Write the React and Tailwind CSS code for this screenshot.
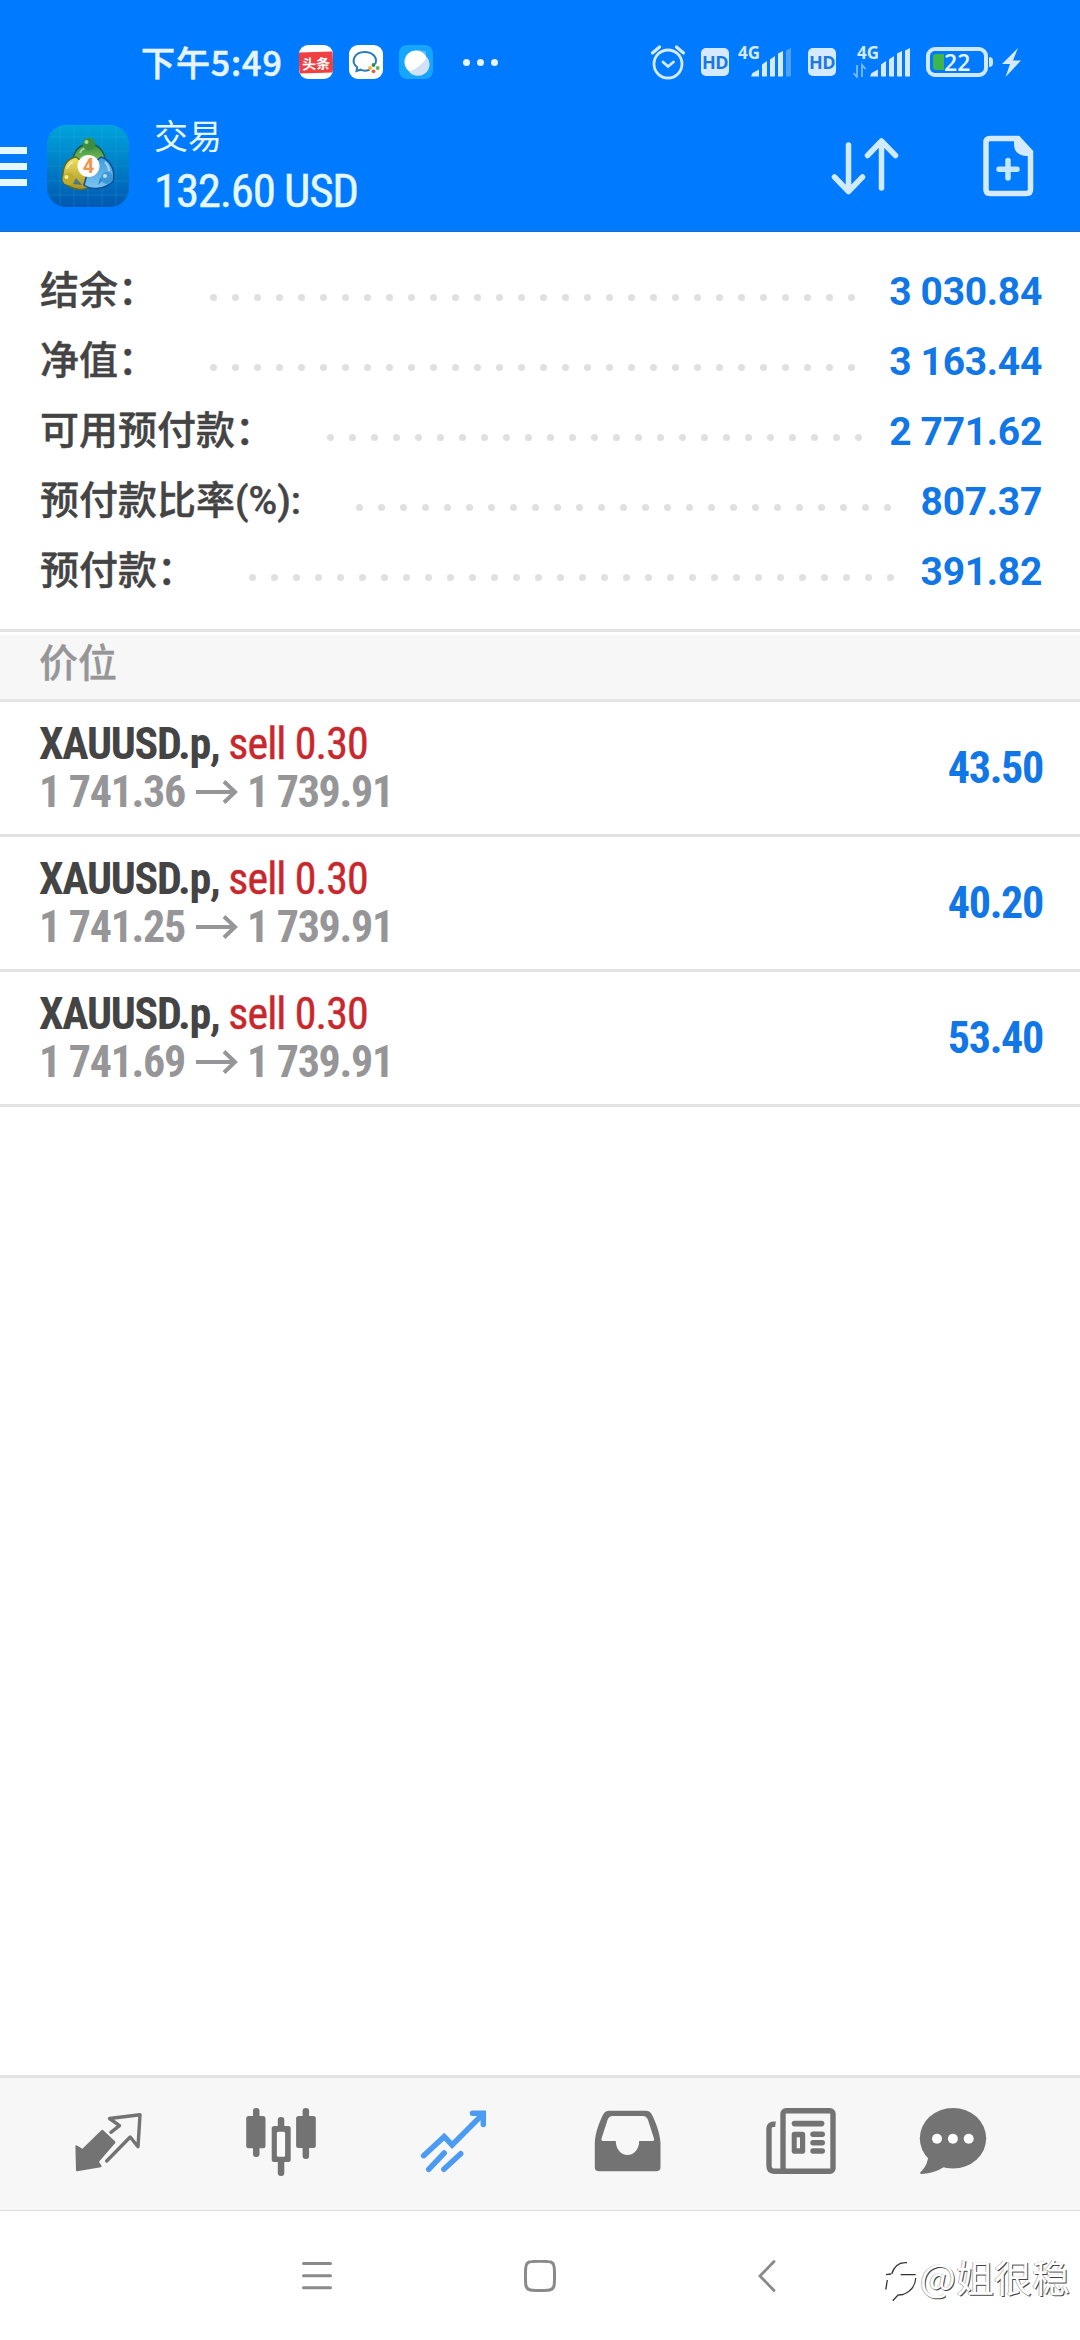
const summary = [
  { label: "结余：", value: "3 030.84", dots: 30, labelWidth: "w-[170px]" },
  { label: "净值：", value: "3 163.44", dots: 30, labelWidth: "w-[170px]" },
  { label: "可用预付款：", value: "2 771.62", dots: 25, labelWidth: "w-[287px]" },
  { label: "预付款比率(%):", value: "807.37", dots: 25, labelWidth: "w-[316px]" },
  { label: "预付款：", value: "391.82", dots: 30, labelWidth: "w-[209px]" },
];

const positions = [
  { symbol: "XAUUSD.p", side: "sell 0.30", open: "1 741.36", current: "1 739.91", profit: "43.50" },
  { symbol: "XAUUSD.p", side: "sell 0.30", open: "1 741.25", current: "1 739.91", profit: "40.20" },
  { symbol: "XAUUSD.p", side: "sell 0.30", open: "1 741.69", current: "1 739.91", profit: "53.40" },
];

function HdBadge() {
  return (
    <span className="flex size-7 items-center justify-center rounded-[5px] bg-[#d6eaff] font-['Open_Sans',sans-serif] text-[18px] font-bold tracking-tight text-[#1a78e0]">
      HD
    </span>
  );
}

function Signal({ weak, data }) {
  return (
    <div className="flex h-9 w-[58px] flex-col">
      <span
        className={`${data ? "pl-1" : ""} h-[14px] font-['Open_Sans',sans-serif] text-[17px] font-bold leading-[17px] text-[#d6eaff]`}
      >
        4G
      </span>
      <svg viewBox="0 3 58 30" className="-mt-[10px] h-[30px] w-[58px]" fill="#d6eaff">
        {data && (
          <path d="M4 20v12l-3.500-4M9 32V20l3.500 4" fill="none" stroke="#7db9ff" strokeWidth="1.800" />
        )}
        <g transform={data ? "translate(17 0)" : "translate(13 0)"}>
          <path d="M0 31.500l1.500-3.500 6.500-3.500v7z" />
          <path d="M11 31.500v-12l5-3.500v15.500z" />
          <path d="M19 31.500v-17l5-3.500v20.500z" />
          <path d="M27 31.500v-23l5-2.500v25.500z" />
          <path d="M35 31.500v-26l5-2.500v28.500z" opacity={weak ? 0.35 : 1} />
        </g>
      </svg>
    </div>
  );
}

function StatusBar() {
  return (
    <div className="flex h-[124px] items-center pl-[141px] pr-[59px]">
      <span className="w-[158px] whitespace-nowrap font-['Noto_Sans_CJK_SC',sans-serif] text-[34px] font-medium leading-none tracking-[0.9px] text-[#e6f4ff] [-webkit-text-stroke:0.6px_currentColor]">
        下午5:49
      </span>
      <div className="flex gap-4">
        <span className="flex size-[34px] items-center overflow-hidden rounded-[9px] bg-white">
          <span className="flex h-[21px] w-full -rotate-2 items-center justify-center whitespace-nowrap bg-[#f04142] font-['Noto_Sans_CJK_SC',sans-serif] text-[14px] font-bold leading-none text-white">
            头条
          </span>
        </span>
        <svg viewBox="0 0 34 34" className="size-[34px]">
          <rect width="34" height="34" rx="9" fill="#fff" />
          <path
            d="M20 25c-3 1-6 1-8.500-.3L7.500 26l.7-3.700C1 16.500 5.500 7 15.500 7 24 7 28.500 12.500 26.500 18.500"
            fill="none"
            stroke="#2b7cb8"
            strokeWidth="2"
            strokeLinecap="round"
          />
          <circle cx="24.500" cy="20" r="1.900" fill="#2c8a5a" />
          <circle cx="28.700" cy="23" r="1.900" fill="#58b947" />
          <circle cx="24.500" cy="26.300" r="1.900" fill="#ef5a35" />
          <circle cx="21" cy="23" r="1.900" fill="#f4b52b" />
        </svg>
        <svg viewBox="0 0 34 34" className="size-[34px]">
          <rect width="34" height="34" rx="8" fill="#16a5ff" />
          <path d="M17 5l10 1v10z" fill="#5bbcff" />
          <circle cx="17" cy="17" r="11.500" fill="#fff" />
          <path d="M28 12a11.500 11.500 0 0 1-18 14.500c7-2 13-7 18-14.500z" fill="#d3e1f5" />
        </svg>
      </div>
      <div className="ml-[30px] flex gap-[7px]">
        <span className="size-[7px] rounded-full bg-[#e6f4ff]" />
        <span className="size-[7px] rounded-full bg-[#e6f4ff]" />
        <span className="size-[7px] rounded-full bg-[#e6f4ff]" />
      </div>

      <div className="ml-auto flex items-center">
        <svg
          viewBox="0 0 36 36"
          className="mr-[15px] size-9"
          fill="none"
          stroke="#d6eaff"
          strokeWidth="2.800"
          strokeLinecap="round"
        >
          <circle cx="18" cy="20" r="14" />
          <path d="M13 18l5 4.500 5.500-4.500" />
          <path d="M2.500 9l7-6M33.500 9l-7-6" strokeWidth="3.200" />
        </svg>
        <HdBadge />
        <div className="ml-[9px] mr-[12px]">
          <Signal weak />
        </div>
        <HdBadge />
        <div className="ml-[17px] mr-[15px]">
          <Signal data />
        </div>
        <div className="flex h-[30px] w-[62px] items-center rounded-[9px] border-4 border-[#cfe8ff] pl-[3px]">
          <span className="h-4 w-[11px] rounded-l-[3px] bg-[#3fb54e]" />
          <span className="font-['Open_Sans',sans-serif] text-[23px] font-semibold leading-none text-[#e6f4ff]">22</span>
        </div>
        <span className="ml-px h-[10px] w-[4px] rounded-r bg-[#cfe8ff]" />
        <svg viewBox="0 0 19 29" className="ml-[9px] h-[29px] w-[19px]" fill="#d6eaff">
          <path d="M16 0L0 16h8L3.500 29 19 12.500h-8z" />
        </svg>
      </div>
    </div>
  );
}

function AppLogo() {
  return (
    <svg viewBox="0 0 82 82" className="size-[82px]">
      <defs>
        <linearGradient id="tile" x1="0" y1="0" x2="0" y2="1">
          <stop offset="0" stopColor="#00a4dc" />
          <stop offset="1" stopColor="#0058b0" />
        </linearGradient>
        <linearGradient id="green" x1="0" y1="0" x2="0" y2="1">
          <stop offset="0" stopColor="#2f8a44" />
          <stop offset="1" stopColor="#9ed05a" />
        </linearGradient>
        <linearGradient id="yellow" x1="0" y1="0" x2="0" y2="1">
          <stop offset="0" stopColor="#f1e25a" />
          <stop offset="1" stopColor="#a8932a" />
        </linearGradient>
        <linearGradient id="blue" x1="0" y1="0" x2="0" y2="1">
          <stop offset="0" stopColor="#3d9be0" />
          <stop offset="1" stopColor="#7cc4f0" />
        </linearGradient>
      </defs>
      <rect width="82" height="82" rx="19" fill="url(#tile)" />
      <path
        d="M13 1v80M27 0v82M41 0v82M55 0v82M69 1v80M1 12h80M0 26h82M0 41h82M0 56h82M1 70h80"
        stroke="#39b5e8"
        strokeOpacity=".2"
      />
      <path d="M42 18C60 22 60 38 55 43L42 40 29 43C24 38 24 22 42 18z" fill="url(#green)" stroke="#1d5c43" strokeWidth="1.500" />
      <path d="M29 32C17 34 15 46 16 57c10 9 22 9 27 4L42 42z" fill="url(#yellow)" stroke="#5d6b2a" strokeWidth="1.500" />
      <path d="M54 32C66 36 68 48 66 56c-8 9-22 9-29 4l5-18z" fill="url(#blue)" stroke="#0d4f91" strokeWidth="1.500" />
      <path d="M33 28q1-4 6-5M20 44q1-5 6-7M58 37q4 4 4 9" fill="none" stroke="#fff" strokeOpacity=".5" strokeWidth="2" />
      <path d="M29 53l-3 6 9 1zM53 53l6-1-8 8z" fill="#0a5ba5" opacity=".6" />
      <circle cx="42" cy="19" r="6.500" fill="#3c8f42" />
      <circle cx="21.500" cy="54" r="6" fill="#c0ac2a" />
      <circle cx="60" cy="53" r="6" fill="#3e97d8" />
      <circle cx="39.500" cy="17" r="2" fill="#a5d89d" />
      <circle cx="19.500" cy="52" r="2" fill="#f3eda0" />
      <circle cx="58" cy="51" r="2" fill="#b9e1fb" />
      <circle cx="41.500" cy="41" r="11" fill="#fff" />
      <text
        x="41.500"
        y="48"
        textAnchor="middle"
        fontSize="20"
        fontWeight="700"
        fontFamily="Roboto, sans-serif"
        fill="#f0954c"
      >
        4
      </text>
    </svg>
  );
}

function Header() {
  return (
    <header className="h-[232px] border-b border-[#1c6cd0] bg-[#007aff]">
      <StatusBar />
      <div className="flex h-[84px] items-center">
        <div className="flex w-[47px] flex-col gap-[9px]">
          <span className="h-[7px] w-[27px] bg-[#e6f8ff]" />
          <span className="h-[7px] w-[27px] bg-[#e6f8ff]" />
          <span className="h-[7px] w-[27px] bg-[#e6f8ff]" />
        </div>
        <AppLogo />
        <div className="ml-[25px]">
          <p className="font-['Noto_Sans_CJK_SC',sans-serif] text-[34px] leading-[44px] text-[#e6f8ff]">交易</p>
          <p className="mt-[6px] whitespace-nowrap font-['Roboto_Condensed',Roboto,sans-serif] text-[47px] leading-[56px] tracking-[-1.3px] text-[#e6f8ff] [-webkit-text-stroke:0.4px_currentColor]">
            132.60 USD
          </p>
        </div>
        <svg
          viewBox="0 0 68 60"
          className="ml-auto h-[60px] w-[68px]"
          fill="none"
          stroke="#d0ebff"
          strokeWidth="5.500"
          strokeLinecap="round"
          strokeLinejoin="round"
        >
          <path d="M17.500 9v46M3.500 41l14 14.500L31.500 41" />
          <path d="M50.500 52V6M36.500 19.500L50.500 5l14 14.500" />
        </svg>
        <svg viewBox="0 0 52 62" className="ml-[83px] mr-[46px] h-[62px] w-[52px]">
          <path
            d="M8 3.500h28L48.500 17v37.500q0 4-4 4H8q-4 0-4-4v-47q0-4 4-4z"
            fill="none"
            stroke="#d6eaff"
            strokeWidth="5.500"
          />
          <path d="M32 3h6l12 13v5h-6q-12-1-12-12z" fill="#d6eaff" />
          <path d="M26 25.500v17.500M17 34.200h18" stroke="#c4e8ff" strokeWidth="5.500" strokeLinecap="round" />
        </svg>
      </div>
    </header>
  );
}

function SummaryRow({ label, value, dots, labelWidth }) {
  return (
    <div className="flex h-[70px] items-center">
      <span
        className={`${labelWidth} shrink-0 whitespace-nowrap pt-[3px] font-[Roboto,'Noto_Sans_CJK_SC',sans-serif] text-[39px] font-medium leading-none text-[#444] [-webkit-text-stroke:0.4px_currentColor]`}
      >
        {label}
      </span>
      <div className="flex gap-[15px] pt-[15px]">
        {Array.from({ length: dots }, (_, index) => (
          <span key={index} className="size-[7px] rounded-full bg-[#e0e0e0]" />
        ))}
      </div>
      <span className="ml-auto whitespace-nowrap pt-[5px] font-[Roboto,sans-serif] text-[39px] font-bold leading-none tracking-[-0.3px] text-[#1277e6]">
        {value}
      </span>
    </div>
  );
}

function PositionRow({ symbol, side, open, current, profit }) {
  return (
    <li className="flex h-[135px] items-center justify-between border-b-3 border-[#e3e3e3] pl-[39px] pr-[37px] font-['Roboto_Condensed',Roboto,sans-serif] text-[44px] font-bold tracking-[-1.3px]">
      <div>
        <p className="whitespace-nowrap leading-[48px] text-[#444]">
          {symbol},{" "}
          <span className="font-normal tracking-[-0.9px] text-[#c8282d] [-webkit-text-stroke:0.4px_currentColor]">
            {side}
          </span>
        </p>
        <p className="flex items-center whitespace-nowrap leading-[48px] text-[#969698]">
          {open}
          <svg
            viewBox="0 0 42 24"
            className="ml-[11px] mr-[9px] h-6 w-[42px]"
            fill="none"
            stroke="#969698"
            strokeWidth="4"
          >
            <path d="M0 12h39M28 1.500L39 12 28 22.500" />
          </svg>
          {current}
        </p>
      </div>
      <span className="text-[#1277e6]">{profit}</span>
    </li>
  );
}

function TabBar() {
  return (
    <nav className="flex h-[136px] items-start gap-[101px] border-b border-t-3 border-b-[#dcdcdc] border-t-[#e3e3e3] bg-[#f7f7f7] pl-[72px] pt-[28px]">
      <svg viewBox="0 0 72 72" className="size-[72px]" strokeLinejoin="round">
        <path
          d="M30.300 24.700L42.500 36.300 25.800 55.700 28.600 60.200 5 64.200 4.400 40.300 10.600 44z"
          fill="#737373"
          stroke="#737373"
          strokeWidth="2"
        />
        <path
          d="M38.900 26.300l8.600-6.600L37.500 12.500 68 8.800 66 40.700 58.200 31 34.700 55"
          fill="none"
          stroke="#737373"
          strokeWidth="3.400"
          strokeLinecap="round"
        />
      </svg>
      <svg viewBox="0 0 72 72" className="size-[72px]" fill="#737373">
        <rect x="8" y="2" width="6.500" height="49" rx="3" />
        <rect x="1.200" y="10" width="19.300" height="32.300" rx="2.500" />
        <rect x="32.800" y="11" width="6.500" height="59" rx="3" />
        <rect x="26.700" y="20" width="19" height="36" rx="2.500" />
        <rect x="31.900" y="25.700" width="8.200" height="25" rx="1.500" fill="#f9f9f9" />
        <rect x="57.600" y="2" width="6.500" height="51" rx="3" />
        <rect x="51.100" y="10" width="19.700" height="32" rx="2.500" />
      </svg>
      <svg
        viewBox="0 0 72 72"
        className="size-[72px]"
        fill="none"
        stroke="#4b9bf2"
        strokeWidth="5.500"
        strokeLinecap="round"
      >
        <path d="M5.600 49.700L26.200 30.700l7.900 8.300L65 8" strokeLinejoin="miter" />
        <path d="M54.500 7.300H65.300V18.500" />
        <path d="M10.700 63.300L26.200 47M25.900 63.300L42.700 47.700" />
      </svg>
      <svg viewBox="0 0 72 72" className="size-[72px]" fill="#737373" fillRule="evenodd">
        <path d="M3.800 37C4 27 9 14 12.500 8Q14.500 4.700 18 4.700H55Q58.500 4.700 60.500 8C64 14 69 27 69.500 37V61Q69.500 65.300 65 65.300H8Q3.800 65.300 3.800 61ZM12 35H24.800C24.800 43 30 49 36.500 49S48.200 43 48.200 35H61.500Q63.500 35 63 32.500L57 14Q55.500 10 52 10H21.500Q18 10 16.500 14L10.500 32.500Q10 35 12 35Z" />
      </svg>
      <svg viewBox="0 0 72 72" className="size-[72px]" fill="none" stroke="#737373" strokeWidth="5.400">
        <rect x="19" y="4.700" width="50" height="60.500" rx="3" />
        <path d="M11.500 18.300Q5 17.500 5 23V59.500Q5 65.200 10 65.200H22" />
        <g fill="#737373" stroke="none">
          <rect x="27.700" y="14.700" width="32.700" height="5.700" rx="2.800" />
          <rect x="46.300" y="25.600" width="14.700" height="5.400" rx="2.700" />
          <rect x="46.300" y="34" width="14.700" height="5.400" rx="2.700" />
          <rect x="46.300" y="42.300" width="14.700" height="5.400" rx="2.700" />
          <rect x="27.700" y="25.700" width="13.500" height="22" rx="2.800" />
        </g>
        <rect x="32.700" y="31.300" width="3.300" height="11" fill="#f7f7f7" stroke="none" />
      </svg>
      <svg viewBox="0 0 72 72" className="-ml-5 size-[72px]">
        <ellipse cx="36" cy="32.300" rx="33.200" ry="30.300" fill="#737373" />
        <path d="M11 48Q12 58 3.200 66.500q-.5 1.500 1.500 1.500Q18 67 27 61z" fill="#737373" />
        <circle cx="20" cy="32.700" r="5" fill="#fff" />
        <circle cx="35.900" cy="32.700" r="5" fill="#fff" />
        <circle cx="51.700" cy="32.700" r="5" fill="#fff" />
      </svg>
    </nav>
  );
}

function SystemNav() {
  return (
    <div className="flex h-[129px] items-center pl-[302px]">
      <svg viewBox="0 0 30 32" className="h-8 w-[30px]" stroke="#8a8a8a" strokeWidth="3" strokeLinecap="round">
        <path d="M1.500 3.500h27M1.500 15.700h27M1.500 27.800h27" />
      </svg>
      <svg viewBox="0 0 32 32" className="ml-[192px] size-8" fill="none" stroke="#8a8a8a" strokeWidth="3">
        <path d="M8 1.600Q16 1 24 1.600 30 1.800 30.300 8q.5 8 0 16-.3 6-6.300 6.300-8 .5-16 0-6-.3-6.300-6.300-.5-8 0-16Q2 1.800 8 1.600z" />
      </svg>
      <svg
        viewBox="0 0 18 32"
        className="ml-[202px] h-8 w-[18px]"
        fill="none"
        stroke="#8a8a8a"
        strokeWidth="2.800"
        strokeLinecap="round"
      >
        <path d="M16 1.500L2 16l14 14.500" />
      </svg>
      <div className="ml-[109px] flex items-center whitespace-nowrap">
        <svg viewBox="0 0 32 42" className="mt-[14px] h-[42px] w-8" fill="none" stroke="#333" strokeWidth="1.300">
          <path d="M1 12.700L6 12M2.300 18L.8 27.700M6.700 12Q10 1 20 .7h2M15.700 12.700h15M30.700 16Q30 28 18 32.500L13 33l-5.300 5.700" />
        </svg>
        <span className="ml-[3px] font-['Noto_Sans_CJK_SC',sans-serif] text-[38px] leading-none text-white [text-shadow:1px_1px_0_#444,-1px_0_0_#bbb]">
          @姐很稳
        </span>
      </div>
    </div>
  );
}

export default function App() {
  return (
    <div className="flex h-[2340px] w-[1080px] flex-col overflow-hidden bg-white">
      <Header />
      <section className="h-[400px] border-b-3 border-[#e3e3e3] pl-10 pr-[38px] pt-[23px]">
        {summary.map((row) => (
          <SummaryRow key={row.label} {...row} />
        ))}
      </section>
      <h2 className="mt-[3px] h-[67px] border-b-3 border-[#e3e3e3] bg-[#f7f7f7] pl-[39px] pt-[6px] font-['Noto_Sans_CJK_SC',sans-serif] text-[39px] font-medium leading-none text-[#969698] [-webkit-text-stroke:0.3px_currentColor]">
        价位
      </h2>
      <ul className="grow">
        {positions.map((position) => (
          <PositionRow key={position.open} {...position} />
        ))}
      </ul>
      <TabBar />
      <SystemNav />
    </div>
  );
}
